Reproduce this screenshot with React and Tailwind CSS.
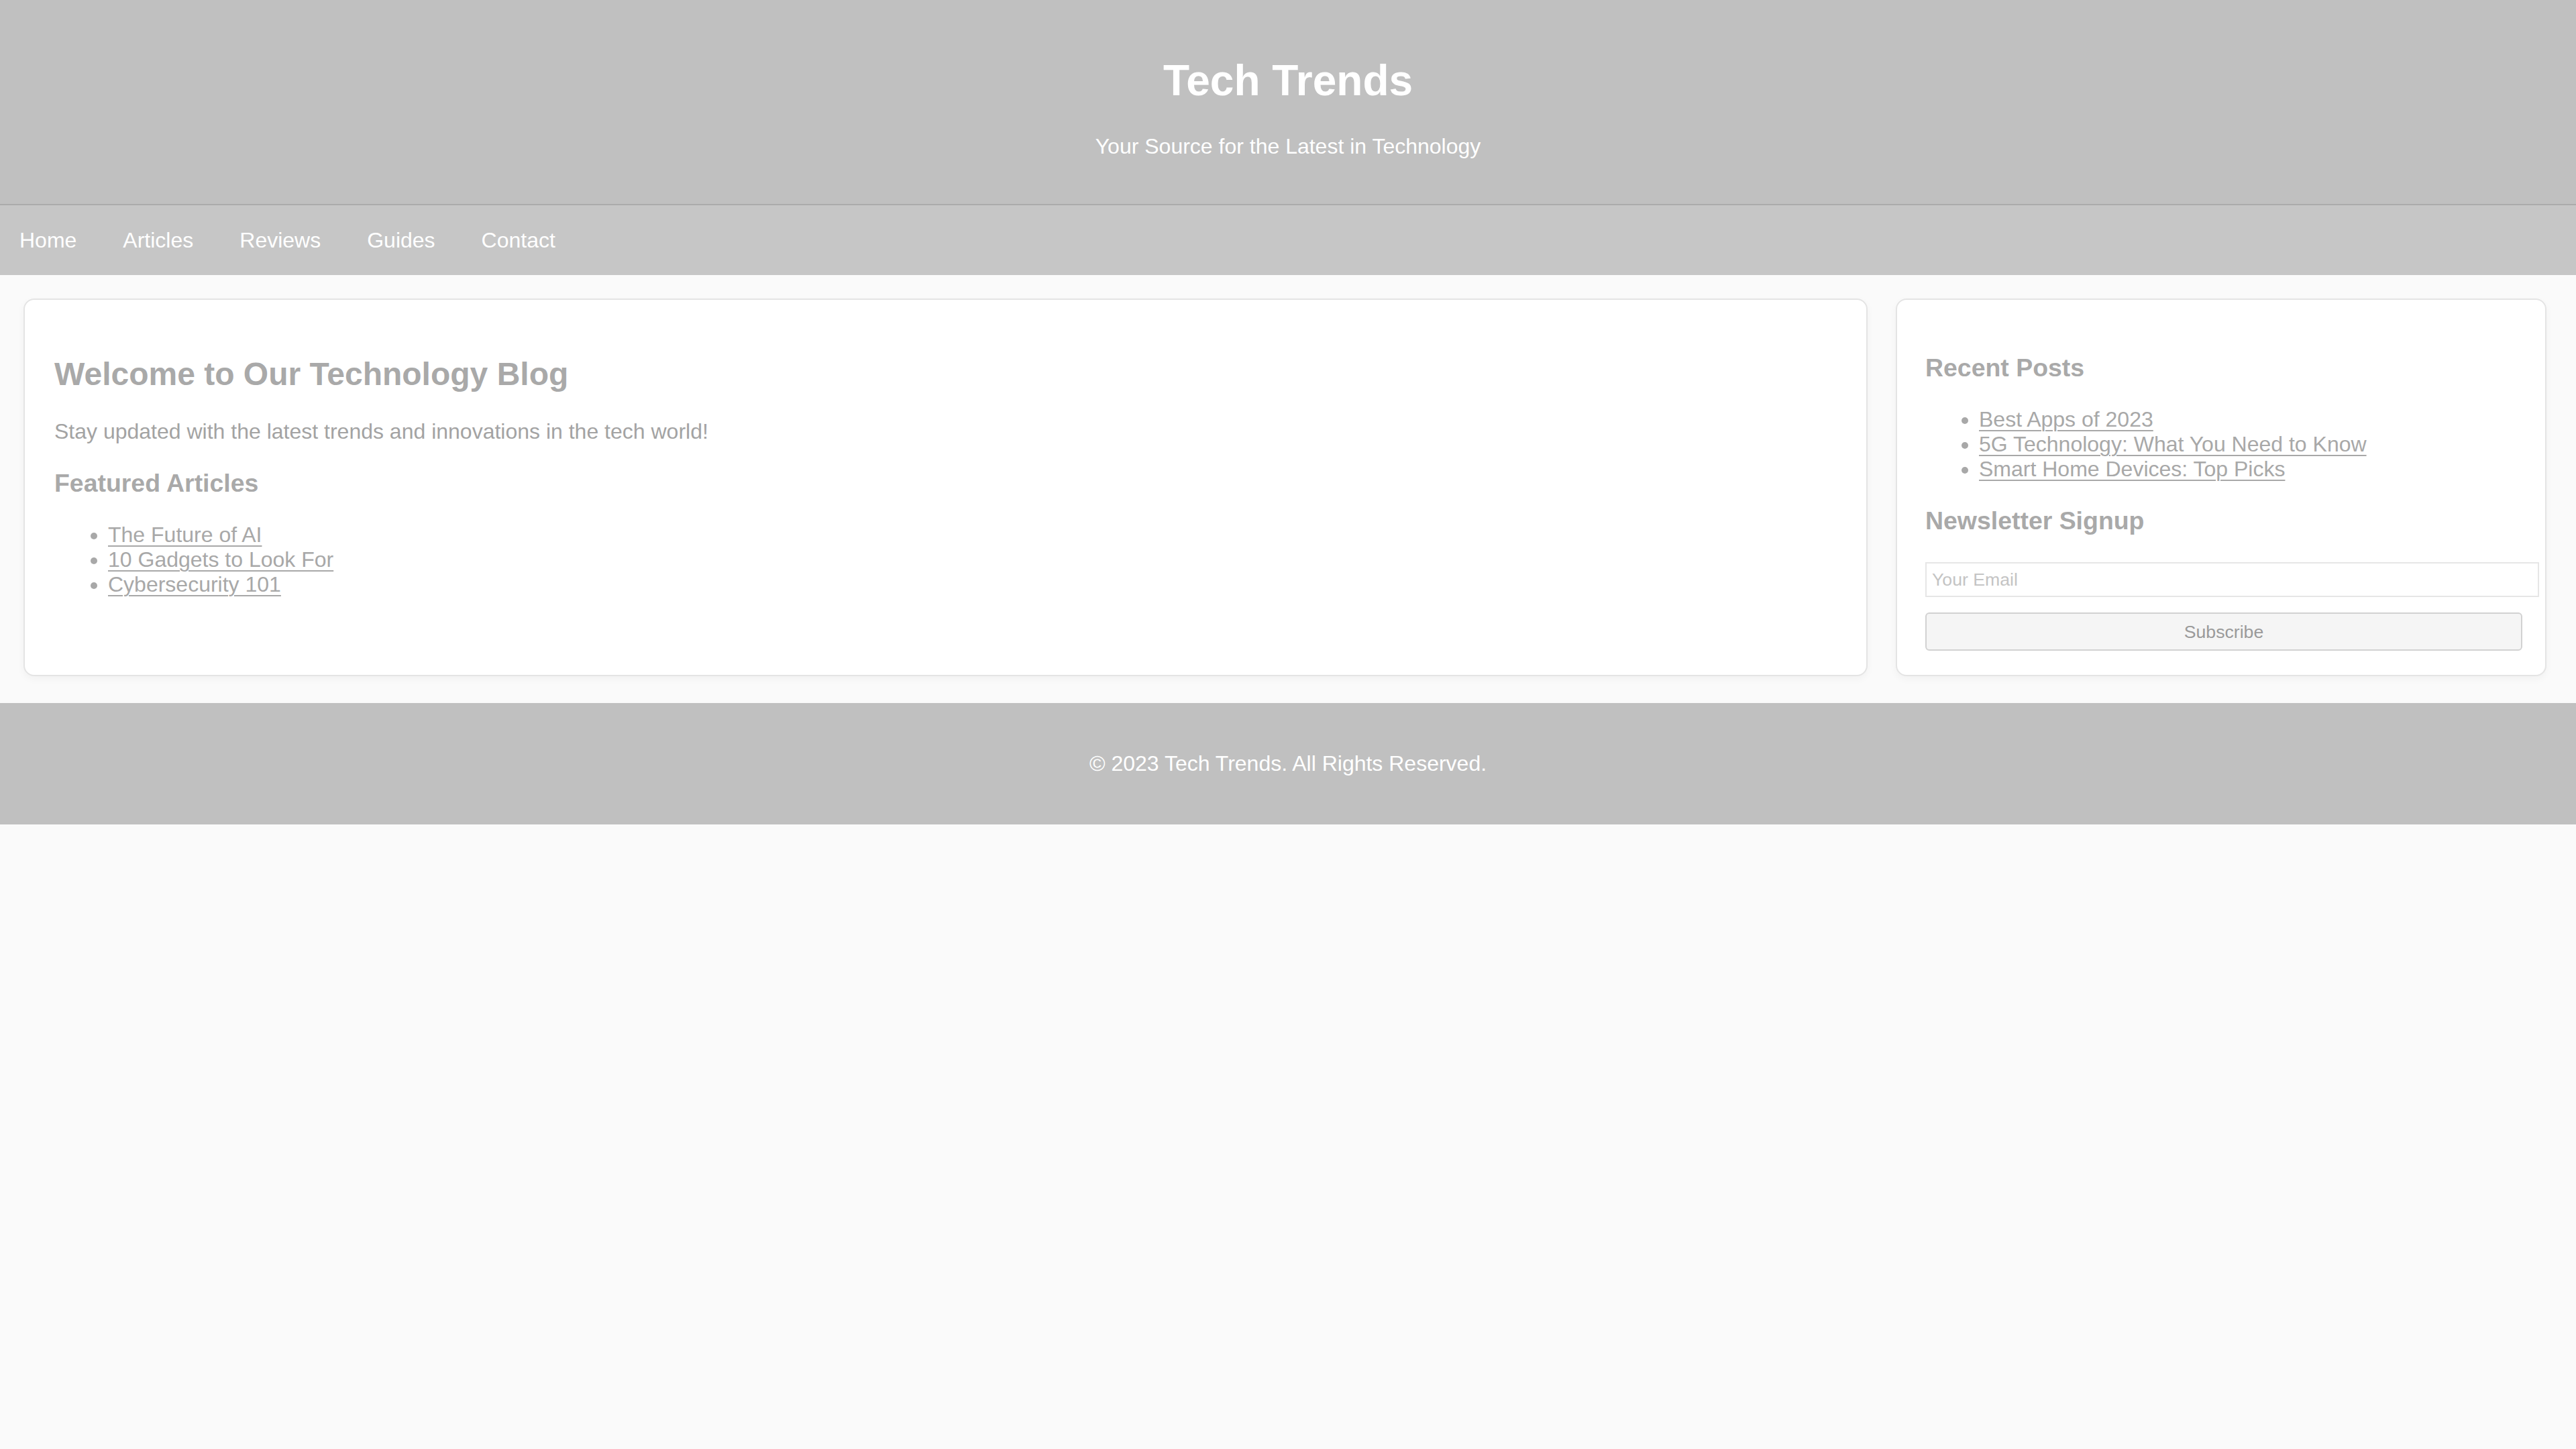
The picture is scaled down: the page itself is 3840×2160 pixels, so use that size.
const navLinks = ['Home', 'Articles', 'Reviews', 'Guides', 'Contact']

const featured = ['The Future of AI', '10 Gadgets to Look For', 'Cybersecurity 101']

const recent = [
  'Best Apps of 2023',
  '5G Technology: What You Need to Know',
  'Smart Home Devices: Top Picks',
]

function LinkList({ items }) {
  return (
    <ul className="list-disc pl-[80px] my-[37px] text-[32px] leading-[37px] text-[#a8a8a8] marker:text-[#a8a8a8]">
      {items.map((item) => (
        <li key={item}>
          <a href="#" className="underline decoration-2 underline-offset-[5px] text-[#a8a8a8]">
            {item}
          </a>
        </li>
      ))}
    </ul>
  )
}

export default function App() {
  return (
    <div className="min-h-screen bg-[#fafafa] font-['Liberation_Sans',Arial,sans-serif]">
      {/* header */}
      <header className="bg-[#c0c0c0] text-white text-center pt-10 pb-[27px] border-b-2 border-[#ababab]">
        <h1 className="text-[64px] font-bold leading-[74px] my-[43px]">Tech Trends</h1>
        <p className="text-[32px] leading-[37px] mb-10">Your Source for the Latest in Technology</p>
      </header>

      <nav className="bg-[#c6c6c6] h-[104px] flex items-center pl-[29px] gap-[69px]">
        {navLinks.map((link) => (
          <a key={link} href="#" className="text-white text-[32px] leading-[37px]">
            {link}
          </a>
        ))}
      </nav>

      {/* main content */}
      <main className="flex items-stretch gap-[42px] pl-[35px] pr-[44px] pt-[35px] pb-[40px]">
        <section className="flex-1 bg-white rounded-[16px] border-2 border-[#e4e4e4] shadow-[0_4px_12px_rgba(0,0,0,0.04)] pt-[43px] pb-[36px] pl-[44px] pr-10">
          <h2 className="text-[48px] font-bold leading-[55px] my-10 text-[#a9a9a9]">
            Welcome to Our Technology Blog
          </h2>
          <p className="text-[32px] leading-[37px] my-[37px] text-[#a3a3a3]">
            Stay updated with the latest trends and innovations in the tech world!
          </p>
          <h3 className="text-[37.44px] font-bold leading-[43px] my-[37px] text-[#a9a9a9]">
            Featured Articles
          </h3>
          <LinkList items={featured} />
        </section>

        <aside className="w-[970px] shrink-0 bg-white rounded-[16px] border-2 border-[#e4e4e4] shadow-[0_4px_12px_rgba(0,0,0,0.04)] pt-[43px] pb-[36px] pl-[42px] pr-10">
          <h3 className="text-[37.44px] font-bold leading-[43px] my-[37px] text-[#a9a9a9]">
            Recent Posts
          </h3>
          <LinkList items={recent} />
          <h3 className="text-[37.44px] font-bold leading-[43px] mt-[37px] mb-[40px] text-[#a9a9a9]">
            Newsletter Signup
          </h3>
          <form onSubmit={(e) => e.preventDefault()}>
            <input
              type="email"
              placeholder="Your Email"
              className="block w-[915px] h-[52px] px-2 border-2 border-[#e6e6e6] bg-white text-[26.67px] text-[#999] placeholder:text-[#c4c4c4] outline-none mb-[23px]"
            />
            <button
              type="submit"
              className="block w-[890px] h-[57px] bg-[#f5f5f5] border-2 border-[#d2d2d2] rounded-[6px] text-[26.67px] text-[#9a9a9a]"
            >
              Subscribe
            </button>
          </form>
        </aside>
      </main>

      <footer className="bg-[#c0c0c0] text-white text-center h-[181px] flex items-center justify-center">
        <p className="text-[32px] leading-[37px]">© 2023 Tech Trends. All Rights Reserved.</p>
      </footer>
    </div>
  )
}
